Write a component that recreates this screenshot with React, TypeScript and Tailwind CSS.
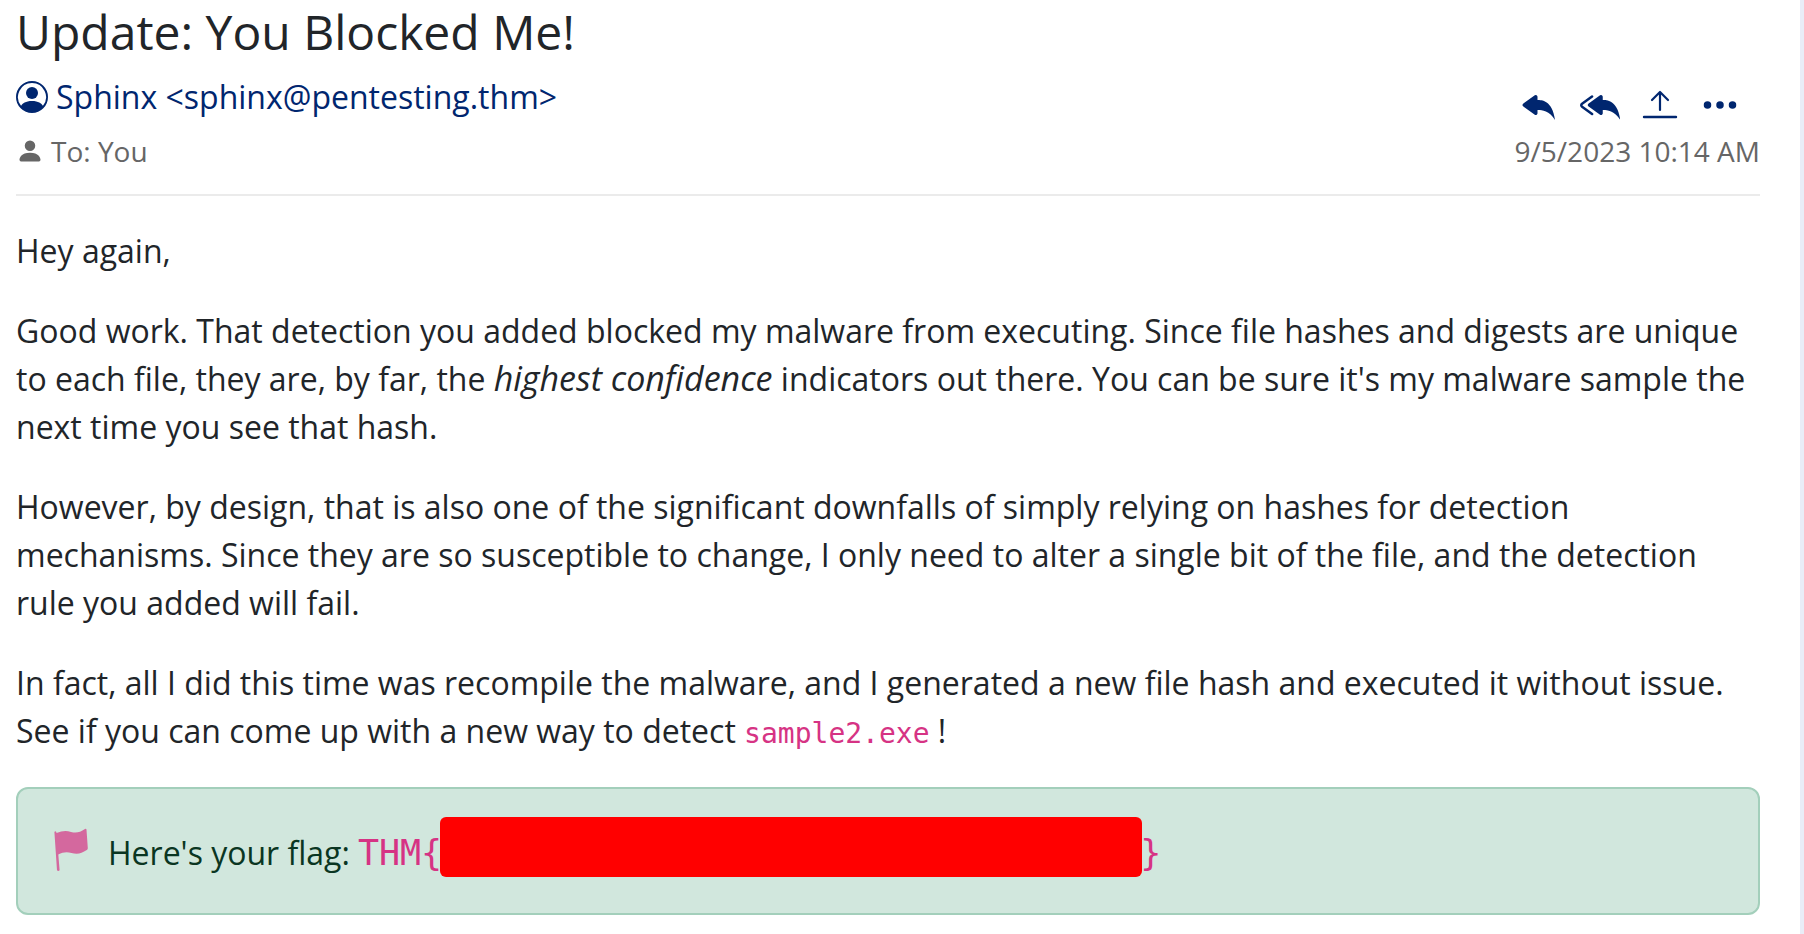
import React from 'react';
import { BsPersonCircle, BsPersonFill, BsReplyFill, BsReplyAllFill, BsThreeDots } from 'react-icons/bs';

const UploadIcon = () => (
  <svg width="36" height="32" viewBox="0 0 36 32" fill="none" stroke="currentColor" strokeWidth="2.2" strokeLinecap="round" strokeLinejoin="round">
    <path d="M18 21V3M10 11l8-8 8 8" />
    <path d="M2 28h32" strokeWidth="2.4" />
  </svg>
);

const FlagIcon = () => (
  <svg width="36" height="44" viewBox="0 0 36 44" fill="#d63384" opacity="0.7" aria-hidden="true">
    <path d="M0.4 4Q1.400 2.600 2.300 4l.2 1C8 2.800 12 2.200 17 3.900c5.500 1.700 9 .2 14-2.900q1.300-.7 1.500.8l1.300 18.400q0 1.200-1 1.900c-5.500 3.600-9.500 4.500-15.300 2.900-4.500-1.300-8.500-1-13.200 1.500l1.300 15.800q-1.300 1.500-2.600 0z" />
  </svg>
);

interface IconButtonProps {
  label: string;
  className?: string;
  children: React.ReactNode;
}

const IconButton: React.FC<IconButtonProps> = ({ label, className = '', children }) => (
  <button type="button" aria-label={label} className={`flex items-center justify-center cursor-pointer ${className}`}>
    {children}
  </button>
);

const MessageHeader = () => (
  <header className="border-b-2 border-[#ebebeb] pb-[22px]">
    <h1 className="text-[48px] leading-[58px]">Update: You Blocked Me!</h1>
    <div className="flex items-end justify-between mt-3">
      <div>
        <a href="mailto:sphinx@pentesting.thm" className="flex items-center gap-2 text-[32px] leading-[48px] text-[#00266f]">
          <BsPersonCircle size={32} />
          Sphinx &lt;sphinx@pentesting.thm&gt;
        </a>
        <div className="flex items-center gap-[7px] mt-[9px] text-[28px] leading-[42px] text-[#666]">
          <BsPersonFill size={28} />
          To: You
        </div>
      </div>
      <div className="flex flex-col items-end">
        <div className="flex items-center gap-[18px] pr-[18px] mb-[5px] text-[#00266f]">
          <IconButton label="Reply" className="w-10"><BsReplyFill size={40} /></IconButton>
          <IconButton label="Reply all" className="w-11"><BsReplyAllFill size={40} /></IconButton>
          <IconButton label="Forward" className="w-10"><UploadIcon /></IconButton>
          <IconButton label="More" className="w-11"><BsThreeDots size={40} /></IconButton>
        </div>
        <time className="text-[28px] leading-[42px] text-[#666]">9/5/2023 10:14 AM</time>
      </div>
    </div>
  </header>
);

const App = () => {
  return (
    <main className="min-h-screen bg-white border-r-4 border-[#e9edf7] pl-4 pr-10 pt-[3px] pb-5 text-[#212529] font-['Open_Sans',sans-serif]">
      <MessageHeader />
      <article className="flex flex-col gap-8 pt-[31px] text-[32px] leading-[48px]">
        <p>Hey again,</p>
        <p>
          Good work. That detection you added blocked my malware from executing. Since file hashes and digests are unique
          to each file, they are, by far, the <em className="text-[34px] leading-none">highest confidence</em> indicators
          out there. You can be sure it's my malware sample the next time you see that hash.
        </p>
        <p>
          However, by design, that is also one of the significant downfalls of simply relying on hashes for detection
          mechanisms. Since they are so susceptible to change, I only need to alter a single bit of the file, and the
          detection rule you added will fail.
        </p>
        <p>
          In fact, all I did this time was recompile the malware, and I generated a new file hash and executed it without
          issue. See if you can come up with a new way to detect{' '}
          <code className="text-[28px] leading-none text-[#d63384] font-['DejaVu_Sans_Mono',monospace]">sample2.exe</code> !
        </p>
        <div className="flex items-center h-32 pl-9 pt-1 rounded-xl border-2 border-[#a3cfbb] bg-[#d1e7dd] text-[#0a3622]">
          <div className="mb-1.5"><FlagIcon /></div>
          <span className="ml-[18px] mr-2">Here's your flag:</span>
          <code className="flex items-center text-[35px] text-[#d63384] font-['DejaVu_Sans_Mono',monospace]">
            THM&#123;
            <span className="-mx-0.5 mb-3 w-[702px] h-[60px] rounded-md bg-[#ff0000] z-10" />
            &#125;
          </code>
        </div>
      </article>
    </main>
  );
};

export default App;
